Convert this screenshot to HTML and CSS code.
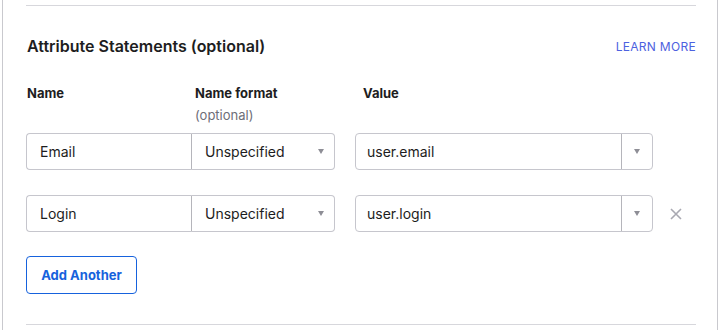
FILE: index.html
```html
<!DOCTYPE html>
<html lang="en">

<head>
    <meta charset="UTF-8">
    <meta name="viewport" content="width=device-width, initial-scale=1.0">
    <title>Attribute Statements</title>
    <link rel="stylesheet" href="styles.css">
</head>

<body>
    <div class="panel">
        <div class="section">
            <div class="section-head">
                <h2>Attribute Statements (optional)</h2>
                <a class="learn-more" href="#">LEARN MORE</a>
            </div>

            <div class="labels">
                <div class="label col-name">Name</div>
                <div class="label col-format">Name format<span class="hint">(optional)</span></div>
                <div class="label col-value">Value</div>
            </div>

            <div class="attr-row">
                <input class="name-input" type="text" value="Email">
                <div class="select">Unspecified<span class="caret"></span></div>
                <div class="combo">
                    <span class="combo-text">user.email</span>
                    <span class="combo-btn"><span class="caret"></span></span>
                </div>
            </div>

            <div class="attr-row">
                <input class="name-input" type="text" value="Login">
                <div class="select">Unspecified<span class="caret"></span></div>
                <div class="combo">
                    <span class="combo-text">user.login</span>
                    <span class="combo-btn"><span class="caret"></span></span>
                </div>
                <button class="remove" title="Remove">
                    <svg width="12" height="12" viewBox="0 0 12 12">
                        <path d="M1 1L11 11M11 1L1 11" stroke="#a9a9b2" stroke-width="1.6" fill="none"/>
                    </svg>
                </button>
            </div>

            <button class="add-btn">Add Another</button>
        </div>
    </div>
</body>

</html>
```

FILE: styles.css
```css
body {
    margin: 0;
    font-family: Inter, "Liberation Sans", sans-serif;
    color: #1d1d21;
    background: #fff;
}

.panel {
    margin-left: 2px;
    width: 716px;
    height: 330px;
    border-left: 1px solid #c9c9ce;
    border-right: 1px solid #c9c9ce;
    padding: 5px 21px 0 23px;
    box-sizing: border-box;
}

.section {
    border-top: 1px solid #d7d7dc;
    border-bottom: 1px solid #d7d7dc;
    height: 320px;
    box-sizing: border-box;
}

.section-head {
    display: flex;
    justify-content: space-between;
    align-items: center;
    margin-top: 30px;
}

h2 {
    margin: 0;
    font-size: 16px;
    font-weight: 600;
    line-height: 20px;
    padding-left: 1px;
}

.learn-more {
    font-size: 12px;
    letter-spacing: 0.3px;
    color: #4d61e0;
    text-decoration: none;
}

.labels {
    display: flex;
    margin-top: 28px;
    font-size: 13px;
    font-weight: 700;
    line-height: 18px;
}

.col-name {
    width: 168px;
    padding-left: 1px;
}

.col-format {
    width: 168px;
    display: flex;
    flex-direction: column;
}

.hint {
    font-weight: 400;
    color: #6e6e78;
    margin-top: 4px;
}

.attr-row {
    display: flex;
    align-items: center;
    margin-top: 9px;
    height: 37px;
}

.attr-row + .attr-row {
    margin-top: 25px;
}

.name-input,
.select,
.combo {
    height: 37px;
    box-sizing: border-box;
    border: 1px solid #c6c6cd;
    font-family: inherit;
    font-size: 14px;
    color: #1d1d21;
}

.name-input {
    width: 166px;
    padding: 0 13px;
    border-radius: 4px 0 0 4px;
    border-right: 1px solid #b5b5bb;
    outline: none;
}

.select {
    width: 143px;
    display: flex;
    align-items: center;
    justify-content: space-between;
    padding: 0 10px 0 13px;
    border-left: none;
    border-radius: 0 4px 4px 0;
}

.combo {
    width: 298px;
    margin-left: 20px;
    display: flex;
    align-items: stretch;
    border-radius: 4px;
}

.combo-text {
    flex: 1;
    display: flex;
    align-items: center;
    padding-left: 11px;
}

.combo-btn {
    width: 30px;
    border-left: 1px solid #b5b5bb;
    display: flex;
    align-items: center;
    justify-content: center;
}

.caret {
    width: 0;
    height: 0;
    border-left: 3.5px solid transparent;
    border-right: 3.5px solid transparent;
    border-top: 5px solid #8e8e96;
}

.remove {
    margin-left: 17px;
    padding: 0;
    border: none;
    background: none;
    width: 12px;
    height: 12px;
    display: flex;
}

.add-btn {
    display: block;
    margin-top: 24px;
    height: 38px;
    width: 111px;
    border: 1px solid #1662dd;
    border-radius: 4px;
    background: #fff;
    color: #1662dd;
    font-family: inherit;
    font-size: 13px;
    font-weight: 700;
}
```
